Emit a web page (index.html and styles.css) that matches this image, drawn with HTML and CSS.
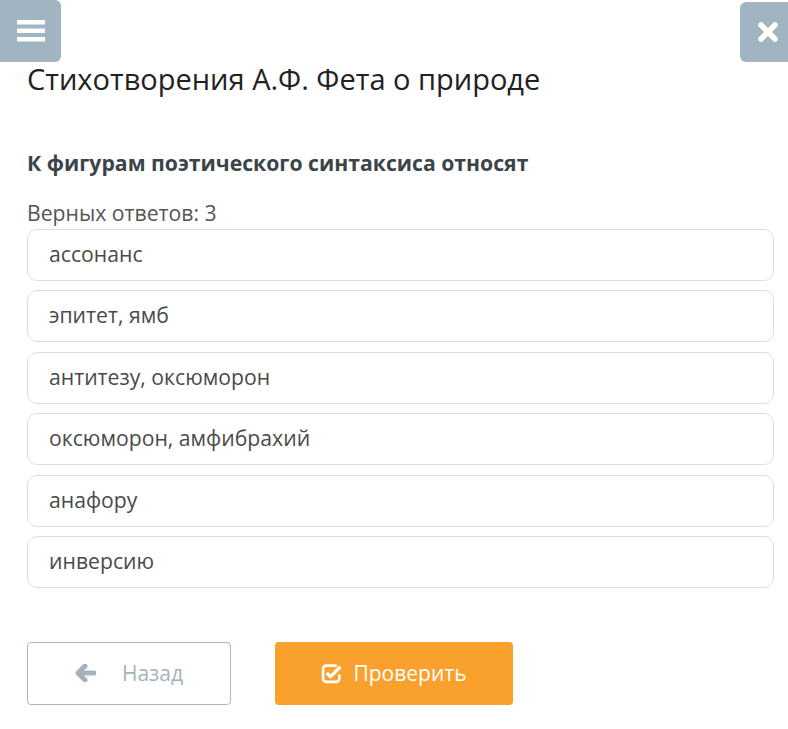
FILE: index.html
```html
<!DOCTYPE html>
<html lang="ru">
<head>
<meta charset="utf-8">
<title>Стихотворения А.Ф. Фета о природе</title>
<link rel="stylesheet" href="styles.css">
</head>
<body>
<div class="topbar">
  <button class="tb-btn menu" aria-label="Меню">
    <svg width="28" height="22" viewBox="0 0 28 22"><rect x="0" y="0" width="28" height="4.5" fill="#fff"/><rect x="0" y="8.5" width="28" height="4.5" fill="#fff"/><rect x="0" y="17" width="28" height="4.5" fill="#fff"/></svg>
  </button>
  <button class="tb-btn close" aria-label="Закрыть">
    <svg width="22" height="22" viewBox="0 0 22 22"><path d="M4 4 L18 18 M18 4 L4 18" stroke="#fff" stroke-width="5.5" stroke-linecap="round"/></svg>
  </button>
</div>
<main class="content">
  <h1 class="title">Стихотворения А.Ф. Фета о природе</h1>
  <h2 class="question">К фигурам поэтического синтаксиса относят</h2>
  <div class="count">Верных ответов: 3</div>
  <div class="options">
    <div class="option">ассонанс</div>
    <div class="option">эпитет, ямб</div>
    <div class="option">антитезу, оксюморон</div>
    <div class="option">оксюморон, амфибрахий</div>
    <div class="option">анафору</div>
    <div class="option">инверсию</div>
  </div>
  <div class="actions">
    <button class="btn back">
      <svg width="21" height="18" viewBox="0 0 21 18"><path d="M10 2 L3 9 L10 16" fill="none" stroke="#a4b3bb" stroke-width="5" stroke-linecap="round" stroke-linejoin="round"/><path d="M4 9 H19" stroke="#a4b3bb" stroke-width="5" stroke-linecap="round"/></svg>
      <span>Назад</span>
    </button>
    <button class="btn check">
      <svg width="22" height="21" viewBox="0 0 21 20"><path d="M15 2.5 H5 A3 3 0 0 0 2 5.5 V15 A3 3 0 0 0 5 18 H14.5 A3 3 0 0 0 17.5 15 V11" fill="none" stroke="#fff" stroke-width="2.6"/><path d="M5.5 9.5 L9 13 L18.5 3.5" fill="none" stroke="#fff" stroke-width="3.2" stroke-linejoin="miter"/></svg>
      <span>Проверить</span>
    </button>
  </div>
</main>
</body>
</html>
```
FILE: styles.css
```css
* { box-sizing: border-box; }
html, body { margin: 0; padding: 0; background: #fff; }
body {
  font-family: "Open Sans", "Noto Sans", sans-serif;
  color: #333;
  width: 788px;
}
.topbar {
  display: flex;
  justify-content: space-between;
  height: 62px;
}
.tb-btn {
  border: none;
  padding: 0;
  background: #a0b5c1;
  display: flex;
  align-items: center;
  justify-content: center;
  cursor: pointer;
}
.menu {
  width: 61px;
  height: 62px;
  border-radius: 0 6px 6px 0;
}
.close {
  width: 48px;
  height: 60px;
  margin-top: 2px;
  border-radius: 6px 0 0 6px;
  padding-left: 8px;
}
.content {
  padding: 0 14px 0 27px;
}
.title {
  margin: 0;
  font-size: 29px;
  font-weight: 400;
  line-height: 34px;
  color: #222;
}
.question {
  margin: 53px 0 0;
  font-size: 21.2px;
  font-weight: 700;
  line-height: 28px;
  color: #3a4449;
}
.count {
  margin-top: 22px;
  font-size: 21.2px;
  line-height: 28px;
  color: #555;
}
.options {
  margin-top: 2px;
  display: flex;
  flex-direction: column;
  gap: 9.4px;
}
.option {
  height: 52px;
  border: 1px solid #dedede;
  border-radius: 10px;
  padding: 0 21px 3px;
  display: flex;
  align-items: center;
  font-size: 21.2px;
  color: #4a4a4a;
}
.actions {
  margin-top: 54px;
  display: flex;
  gap: 44px;
}
.btn {
  height: 63px;
  border-radius: 4px;
  font-family: inherit;
  font-size: 21px;
  display: flex;
  align-items: center;
  justify-content: center;
  cursor: pointer;
}
.back {
  width: 204px;
  background: #fff;
  border: 1px solid #a9b9c2;
  color: #a4b3bb;
  gap: 26px;
}
.check {
  width: 238px;
  background: #f9a12c;
  border: none;
  color: #fff;
  gap: 10px;
}
```
